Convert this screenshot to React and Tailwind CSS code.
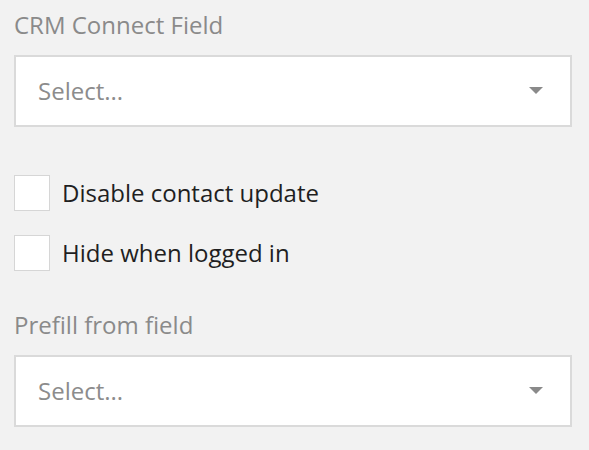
import React from 'react';

const font = { fontFamily: '"Open Sans", "Noto Sans", sans-serif' };

const SelectBox = () => (
  <div className="flex h-[72px] w-[558px] items-center justify-between border-2 border-[#dadada] bg-white pl-[22px] pr-[27px]">
    <span className="text-[24px] leading-[36px] text-[#8c8c8c]">Select...</span>
    <svg width="14" height="8" viewBox="0 0 14 8">
      <path d="M0 0 L14 0 L7 7 Z" fill="#8a8a8a" />
    </svg>
  </div>
);

const Checkbox = ({ label }) => (
  <label className="flex items-center gap-[12px]">
    <span className="h-[36px] w-[36px] border border-[#d6d6d6] bg-white" />
    <span className="text-[24px] leading-[36px] text-[#1f1f1f]">{label}</span>
  </label>
);

export default function App() {
  return (
    <div className="min-h-[450px] bg-[#f2f2f2] px-[14px] pt-[7px]" style={font}>
      <div className="text-[24px] leading-[36px] text-[#8a8a8a]">CRM Connect Field</div>
      <div className="mt-[12px]">
        <SelectBox />
      </div>
      <div className="mt-[48px] flex flex-col gap-[24px]">
        <Checkbox label="Disable contact update" />
        <Checkbox label="Hide when logged in" />
      </div>
      <div className="mt-[36px] text-[24px] leading-[36px] text-[#8a8a8a]">Prefill from field</div>
      <div className="mt-[12px]">
        <SelectBox />
      </div>
    </div>
  );
}
